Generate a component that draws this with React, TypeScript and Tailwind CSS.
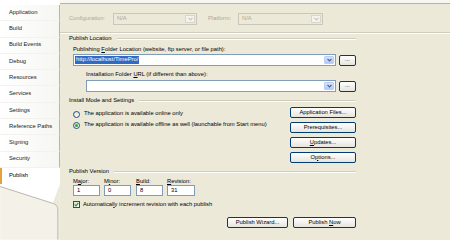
import React from 'react'

const tabs = [
  'Application',
  'Build',
  'Build Events',
  'Debug',
  'Resources',
  'Services',
  'Settings',
  'Reference Paths',
  'Signing',
  'Security',
  'Publish',
]

function Chevron({ color }: { color: string }) {
  return (
    <svg width="5" height="4" viewBox="0 0 5 4">
      <path d="M0.5 0.8 L2.5 2.8 L4.5 0.8" fill="none" stroke={color} strokeWidth="1.2" />
    </svg>
  )
}

function Combo({ width, disabled, children }: { width: string; disabled?: boolean; children?: React.ReactNode }) {
  if (disabled) {
    return (
      <div className={`${width} h-[12px] flex items-stretch border border-[#c9c7ba] bg-[#ecE9d8]`}>
        <div className="flex-1 flex items-center pl-[3px] text-[#aca899]">{children}</div>
        <div className="w-[10px] m-px flex items-center justify-center border border-[#d8d6cb] bg-[#f4f3ee]">
          <Chevron color="#c9c7ba" />
        </div>
      </div>
    )
  }
  return (
    <div className={`${width} h-[12px] flex items-stretch border border-[#7f9db9] bg-white`}>
      <div className="flex-1 flex items-center pl-px">{children}</div>
      <div className="w-[10px] m-px flex items-center justify-center rounded-[1px] bg-gradient-to-b from-[#d6e3fd] to-[#b1c8f8] border border-[#b9cdf6]">
        <Chevron color="#4d6185" />
      </div>
    </div>
  )
}

function XpButton({ className, children }: { className: string; children: React.ReactNode }) {
  return (
    <div
      className={`${className} flex items-center justify-center border border-[#003c74] rounded-[2px] bg-gradient-to-b from-white to-[#e6e4dc] text-black`}
    >
      {children}
    </div>
  )
}

function Header({ children }: { children: React.ReactNode }) {
  return (
    <div className="h-[8px] flex items-center">
      <span className="mr-[5px]">{children}</span>
      <div className="flex-1 h-[2px] border-t border-[#cfcdc0] border-b border-b-white" />
    </div>
  )
}

function Radio({ checked }: { checked?: boolean }) {
  return (
    <div className="w-[7px] h-[7px] rounded-full border border-[#1c5180] bg-gradient-to-br from-[#dcdcd6] to-white flex items-center justify-center">
      {checked && <div className="w-[3px] h-[3px] rounded-full bg-[#2fa62f]" />}
    </div>
  )
}

function TextBox({ width, value }: { width: string; value: string }) {
  return (
    <div className={`${width} h-[11px] border border-[#7f9db9] bg-white flex items-center pl-[3px]`}>{value}</div>
  )
}

export default function App() {
  return (
    <div
      className="w-[450px] h-[240px] flex overflow-hidden bg-white text-[5.8px] leading-none text-black"
      style={{ fontFamily: '"Liberation Sans", Arial, sans-serif' }}
    >
      {/* sidebar */}
      <div className="w-[60px] flex flex-col pt-[5px] bg-white">
        {tabs.map((t) => {
          const selected = t === 'Publish'
          return (
            <div
              key={t}
              className={
                selected
                  ? 'h-[16.4px] flex items-center pl-[7px] bg-white border-l-2 border-[#e6a23a] text-black'
                  : 'h-[16.4px] flex items-center pl-[9px] bg-gradient-to-r from-white to-[#f6f6f3] border-r border-[#b8b6aa] border-b border-b-[#f3f2ee] text-[#1a1a1a]'
              }
            >
              {t}
            </div>
          )
        })}
        <svg width="60" height="56" viewBox="0 0 60 56" className="block">
          <path d="M0 0 L60 0 L60 56 L58 56 L58 26 Q58 21 53 19.5 L0 2.5 Z" fill="#ffffff" />
          <path d="M0 2.5 L53 19.5 Q58 21 58 26 L58 56 L0 56 Z" fill="#f3f1e8" />
          <path d="M60 0 L60 56 L58.5 56 L58.5 26 Q58.5 21 53 19.5 Z" fill="#ece9d8" />
          <path d="M0 2.5 L53 19.5 Q58 21 58 26 L58 56" fill="none" stroke="#a9a79b" strokeWidth="0.8" />
        </svg>
      </div>

      {/* main panel */}
      <div className="flex-1 flex flex-col bg-[#f7f6f1]">
        <div className="mt-[3px] flex-1 border-t border-[#a7b4cc] bg-[#ece9d8] pl-[9px]">
          <div className="w-[287px] flex flex-col">
            {/* configuration row */}
            <div className="mt-[9px] h-[12px] flex items-center text-[#aca899]">
              <span className="w-[44px]">Configuration:</span>
              <Combo width="w-[84px]" disabled>
                N/A
              </Combo>
              <span className="ml-[11px] w-[30px]">Platform:</span>
              <Combo width="w-[85px]" disabled>
                N/A
              </Combo>
            </div>

            <div className="mt-[7px] -ml-[9px] w-[390px] h-[2px] border-t border-[#cfcdc0] border-b border-b-white" />

            <div className="mt-px">
              <Header>Publish Location</Header>
            </div>

            <div className="mt-[3px] h-[8px] flex items-center pl-[4px]">
              <span>
                Publishing <span className="underline">F</span>older Location (website, ftp server, or file path):
              </span>
            </div>
            <div className="flex items-center pl-[4px]">
              <Combo width="w-[263px]">
                <span className="bg-[#316ac5] text-white px-px py-[1px]">http://localhost/TimePro/</span>
              </Combo>
              <XpButton className="ml-[3px] w-[17px] h-[11px] text-[#1f2a6b]">...</XpButton>
            </div>

            <div className="mt-[5px] h-[8px] flex items-center pl-[17px]">
              <span>
                Installation Folder <span className="underline">U</span>RL (if different than above):
              </span>
            </div>
            <div className="mt-px flex items-center pl-[17px]">
              <Combo width="w-[250px]" />
              <XpButton className="ml-[3px] w-[17px] h-[11px] text-[#1f2a6b]">...</XpButton>
            </div>

            <div className="mt-[5px]">
              <Header>Install Mode and Settings</Header>
            </div>

            <div className="mt-[2px] flex">
              <div className="flex-1 flex flex-col pl-[4px] pt-[3px] gap-[3px]">
                <div className="h-[8px] flex items-center gap-[4px]">
                  <Radio />
                  <span>The application is available online only</span>
                </div>
                <div className="h-[8px] flex items-center gap-[4px]">
                  <Radio checked />
                  <span>The application is available offline as well (launchable from Start menu)</span>
                </div>
              </div>
              <div className="w-[66px] flex flex-col gap-[4px]">
                <XpButton className="h-[11px]">Application Files...</XpButton>
                <XpButton className="h-[11px]">Prerequisites...</XpButton>
                <XpButton className="h-[11px]">
                  <span>
                    <span className="underline">U</span>pdates...
                  </span>
                </XpButton>
                <XpButton className="h-[11px]">
                  <span>
                    O<span className="underline">p</span>tions...
                  </span>
                </XpButton>
              </div>
            </div>

            <div className="mt-[5px]">
              <Header>Publish Version</Header>
            </div>

            <div className="mt-[2px] h-[7px] flex items-center pl-[4px]">
              <span className="w-[31px]">
                M<span className="underline">a</span>jor:
              </span>
              <span className="w-[32px]">
                M<span className="underline">i</span>nor:
              </span>
              <span className="w-[31px]">
                <span className="underline">B</span>uild:
              </span>
              <span>
                <span className="underline">R</span>evision:
              </span>
            </div>
            <div className="flex pl-[4px]">
              <TextBox width="w-[27px]" value="1" />
              <div className="ml-[4px]">
                <TextBox width="w-[27px]" value="0" />
              </div>
              <div className="ml-[5px]">
                <TextBox width="w-[27px]" value="8" />
              </div>
              <div className="ml-[4px]">
                <TextBox width="w-[28px]" value="31" />
              </div>
            </div>

            <div className="mt-[4px] h-[9px] flex items-center gap-[3px] pl-[4px]">
              <div className="w-[7px] h-[7px] border border-[#1c5180] bg-gradient-to-br from-[#dcdcd6] to-white flex items-center justify-center">
                <svg width="5" height="5" viewBox="0 0 5 5">
                  <path d="M0.6 2.4 L2 3.8 L4.4 1" fill="none" stroke="#21a121" strokeWidth="1.2" />
                </svg>
              </div>
              <span>
                Automatical<span className="underline">l</span>y increment revision with each publish
              </span>
            </div>

            <div className="mt-[8px] flex justify-end gap-[5px]">
              <XpButton className="w-[61px] h-[11px]">Publish Wizard...</XpButton>
              <XpButton className="w-[63px] h-[11px]">
                <span>
                  Publish <span className="underline">N</span>ow
                </span>
              </XpButton>
            </div>
          </div>
        </div>
      </div>
    </div>
  )
}
